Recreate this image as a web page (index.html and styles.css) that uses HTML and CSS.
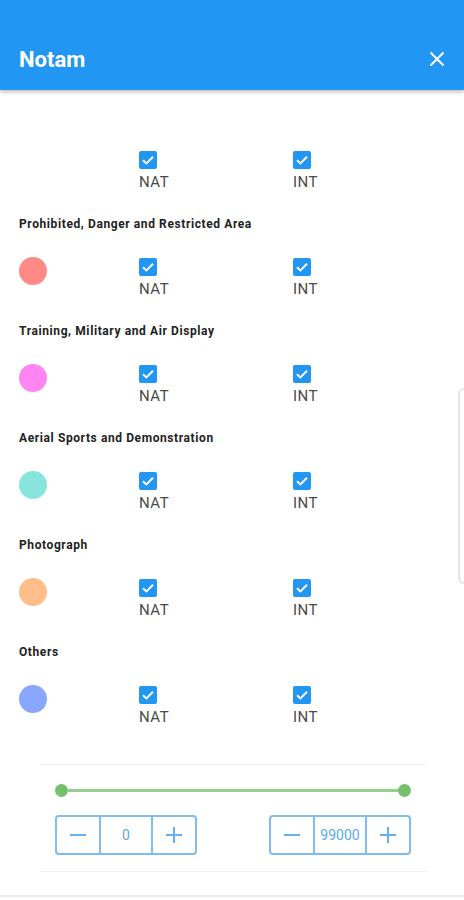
FILE: index.html
```html
<!DOCTYPE html>
<html lang="en">
<head>
  <meta charset="UTF-8">
  <meta name="viewport" content="width=device-width, initial-scale=1.0">
  <title>Notam</title>
  <link rel="stylesheet" href="styles.css">
</head>
<body>
  <!-- Barre du haut -->
  <header class="topbar">
    <h1 class="topbar-title">Notam</h1>
    <svg class="close" width="16" height="16" viewBox="0 0 16 16">
      <path d="M1.5 1.5 L14.5 14.5 M14.5 1.5 L1.5 14.5" stroke="#fff" stroke-width="2" fill="none"/>
    </svg>
  </header>

  <main class="content">
    <div class="row row-first">
      <span></span>
      <label class="opt"><span class="check"></span><span class="opt-text">NAT</span></label>
      <label class="opt"><span class="check"></span><span class="opt-text">INT</span></label>
    </div>

    <section class="group">
      <h2 class="group-title">Prohibited, Danger and Restricted Area</h2>
      <div class="row">
        <span class="dot dot-red"></span>
        <label class="opt"><span class="check"></span><span class="opt-text">NAT</span></label>
        <label class="opt"><span class="check"></span><span class="opt-text">INT</span></label>
      </div>
    </section>

    <section class="group">
      <h2 class="group-title">Training, Military and Air Display</h2>
      <div class="row">
        <span class="dot dot-pink"></span>
        <label class="opt"><span class="check"></span><span class="opt-text">NAT</span></label>
        <label class="opt"><span class="check"></span><span class="opt-text">INT</span></label>
      </div>
    </section>

    <section class="group">
      <h2 class="group-title">Aerial Sports and Demonstration</h2>
      <div class="row">
        <span class="dot dot-cyan"></span>
        <label class="opt"><span class="check"></span><span class="opt-text">NAT</span></label>
        <label class="opt"><span class="check"></span><span class="opt-text">INT</span></label>
      </div>
    </section>

    <section class="group">
      <h2 class="group-title">Photograph</h2>
      <div class="row">
        <span class="dot dot-orange"></span>
        <label class="opt"><span class="check"></span><span class="opt-text">NAT</span></label>
        <label class="opt"><span class="check"></span><span class="opt-text">INT</span></label>
      </div>
    </section>

    <section class="group">
      <h2 class="group-title">Others</h2>
      <div class="row">
        <span class="dot dot-blue"></span>
        <label class="opt"><span class="check"></span><span class="opt-text">NAT</span></label>
        <label class="opt"><span class="check"></span><span class="opt-text">INT</span></label>
      </div>
    </section>

    <!-- Altitude -->
    <div class="range-box">
      <div class="slider">
        <span class="thumb"></span>
        <span class="track"></span>
        <span class="thumb"></span>
      </div>
      <div class="steppers">
        <div class="stepper">
          <button class="step-btn">
            <svg width="18" height="18" viewBox="0 0 18 18"><path d="M1 9 H17" stroke="#64b0f2" stroke-width="2"/></svg>
          </button>
          <span class="step-value">0</span>
          <button class="step-btn">
            <svg width="18" height="18" viewBox="0 0 18 18"><path d="M1 9 H17 M9 1 V17" stroke="#64b0f2" stroke-width="2"/></svg>
          </button>
        </div>
        <div class="stepper">
          <button class="step-btn">
            <svg width="18" height="18" viewBox="0 0 18 18"><path d="M1 9 H17" stroke="#64b0f2" stroke-width="2"/></svg>
          </button>
          <span class="step-value">99000</span>
          <button class="step-btn">
            <svg width="18" height="18" viewBox="0 0 18 18"><path d="M1 9 H17 M9 1 V17" stroke="#64b0f2" stroke-width="2"/></svg>
          </button>
        </div>
      </div>
    </div>
  </main>

  <div class="edge-tab"></div>
  <div class="bottom-line"></div>
</body>
</html>
```

FILE: styles.css
```css
* {
  margin: 0;
  padding: 0;
  box-sizing: border-box;
}

body {
  font-family: Roboto, "Noto Sans", sans-serif;
  background: #fff;
  width: 464px;
  height: 900px;
  overflow: hidden;
  position: relative;
}

/* Barre du haut */
.topbar {
  height: 90px;
  background: #2196f3;
  display: flex;
  align-items: center;
  justify-content: space-between;
  padding: 28px 18px 0 19px;
  box-shadow: 0 2px 4px rgba(0, 0, 0, 0.25);
  position: relative;
  z-index: 1;
}

.topbar-title {
  color: #fff;
  font-size: 22px;
  font-weight: 700;
}

.close {
  margin-right: 1px;
}

/* Liste des couches */
.content {
  padding-top: 61px;
}

.row {
  display: grid;
  grid-template-columns: 120px 154px auto;
  padding-left: 19px;
  height: 39px;
}

.row-first {
  margin-bottom: 24px;
}

.group {
  height: 107px;
}

.group-title {
  height: 20px;
  line-height: 20px;
  font-size: 12px;
  font-weight: 700;
  letter-spacing: 0.6px;
  color: #222;
  padding-left: 19px;
  margin-bottom: 24px;
}

.dot {
  width: 28px;
  height: 28px;
  border-radius: 50%;
  margin-top: -1px;
}

.dot-red { background: #ff8a85; }
.dot-pink { background: #ff85f2; }
.dot-cyan { background: #88e5de; }
.dot-orange { background: #ffbe8a; }
.dot-blue { background: #8aa7ff; }

.opt {
  display: flex;
  flex-direction: column;
  align-items: flex-start;
}

.check {
  width: 18px;
  height: 18px;
  border-radius: 2px;
  background: #2196f3 url("data:image/svg+xml,%3Csvg xmlns='http://www.w3.org/2000/svg' viewBox='0 0 18 18'%3E%3Cpath d='M4 9.2 L7.4 12.4 L14 5.8' stroke='white' stroke-width='2' fill='none'/%3E%3C/svg%3E") center / 18px 18px no-repeat;
}

.opt-text {
  margin-top: 5px;
  line-height: 16px;
  font-size: 15px;
  letter-spacing: 0.5px;
  color: #4a4a4a;
}

/* Curseur d'altitude */
.range-box {
  margin: 15px 36px 0 40px;
  border-top: 1px solid #f2f2f2;
  border-bottom: 1px solid #f2f2f2;
  height: 108px;
  padding: 19px 17px 0 15px;
}

.slider {
  display: flex;
  align-items: center;
  height: 13px;
}

.thumb {
  width: 13px;
  height: 13px;
  border-radius: 50%;
  background: #74c06e;
}

.track {
  flex: 1;
  height: 3px;
  margin: 0 -1px;
  background: #94cf8f;
}

.steppers {
  display: flex;
  justify-content: space-between;
  margin-top: 18px;
}

.stepper {
  display: flex;
  height: 40px;
  border: 2px solid #7dbdf4;
  border-radius: 4px;
}

.step-btn {
  width: 42px;
  border: none;
  background: none;
  display: flex;
  align-items: center;
  justify-content: center;
}

.step-value {
  width: 54px;
  border-left: 2px solid #7dbdf4;
  border-right: 2px solid #7dbdf4;
  display: flex;
  align-items: center;
  justify-content: center;
  font-size: 14px;
  color: #5aa8ee;
}

/* Poignée du panneau latéral */
.edge-tab {
  position: absolute;
  right: -6px;
  top: 388px;
  width: 12px;
  height: 196px;
  border: 2px solid #e4e4e4;
  border-radius: 6px;
  background: #fff;
}

.bottom-line {
  position: absolute;
  left: 0;
  right: 0;
  bottom: 3px;
  height: 2px;
  background: #ececec;
}
```
